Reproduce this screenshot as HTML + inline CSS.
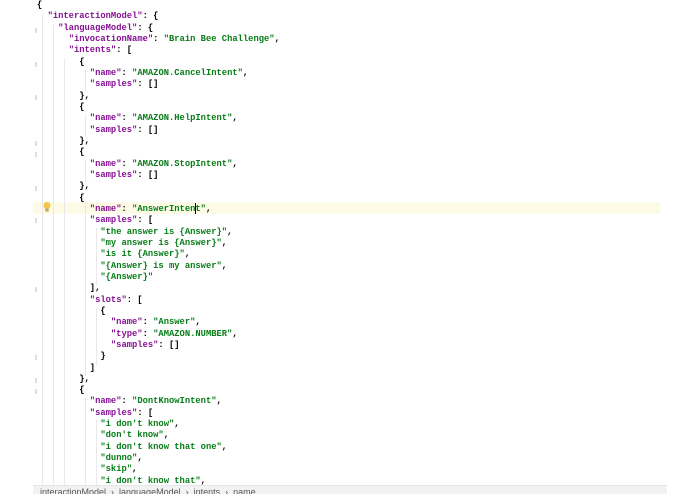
<!DOCTYPE html>
<html><head><style>
html,body{margin:0;padding:0;background:#fff;width:695px;height:494px;overflow:hidden;position:relative}
pre{position:absolute;left:37px;top:0px;margin:0;font-family:"Liberation Mono",monospace;font-weight:bold;font-size:8.8px;line-height:11.33px;color:#000;z-index:2}
.k{color:#871094}.s{color:#067d17}
.g{position:absolute;width:1px;background:#e8e8e8;z-index:1}
.hl{position:absolute;left:33px;top:202px;width:627px;height:12px;background:#fdfbe5;z-index:0}
.m{position:absolute;left:35px;width:2px;height:5px;background:#ddd}
.bar{position:absolute;left:33px;top:485px;width:627px;height:9px;background:#f2f2f2;border-top:1px solid #e6e6e6;font:9px "Liberation Sans",sans-serif;color:#555;padding-left:7px;line-height:12px;z-index:3}
.caret{position:absolute;left:195px;top:203px;width:1px;height:11px;background:#000;z-index:4}
</style></head><body>
<div class="hl"></div>
<div class="g" style="left:42px;top:14px;height:473px"></div>
<div class="g" style="left:53px;top:25px;height:462px"></div>
<div class="g" style="left:64px;top:59px;height:428px"></div>
<div class="g" style="left:85px;top:70px;height:22px"></div>
<div class="g" style="left:85px;top:115px;height:22px"></div>
<div class="g" style="left:85px;top:160px;height:22px"></div>
<div class="g" style="left:85px;top:206px;height:170px"></div>
<div class="g" style="left:96px;top:228px;height:57px"></div>
<div class="g" style="left:96px;top:308px;height:57px"></div>
<div class="g" style="left:85px;top:398px;height:88px"></div>
<div class="g" style="left:96px;top:420px;height:66px"></div>
<div class="m" style="top:28px"></div><div class="m" style="top:62px"></div><div class="m" style="top:95px"></div><div class="m" style="top:141px"></div><div class="m" style="top:152px"></div><div class="m" style="top:186px"></div><div class="m" style="top:218px"></div><div class="m" style="top:287px"></div><div class="m" style="top:355px"></div><div class="m" style="top:378px"></div><div class="m" style="top:389px"></div>
<svg style="position:absolute;left:42px;top:201px;z-index:4" width="10" height="12"><circle cx="5" cy="4.5" r="3.6" fill="#f3c74a"/><rect x="3.3" y="7.5" width="3.4" height="3" fill="#b9a46a"/></svg>
<div class="caret"></div>
<pre>{
  <span class="k">"interactionModel"</span>: {
    <span class="k">"languageModel"</span>: {
      <span class="k">"invocationName"</span>: <span class="s">"Brain Bee Challenge"</span>,
      <span class="k">"intents"</span>: [
        {
          <span class="k">"name"</span>: <span class="s">"AMAZON.CancelIntent"</span>,
          <span class="k">"samples"</span>: []
        },
        {
          <span class="k">"name"</span>: <span class="s">"AMAZON.HelpIntent"</span>,
          <span class="k">"samples"</span>: []
        },
        {
          <span class="k">"name"</span>: <span class="s">"AMAZON.StopIntent"</span>,
          <span class="k">"samples"</span>: []
        },
        {
          <span class="k">"name"</span>: <span class="s">"AnswerIntent"</span>,
          <span class="k">"samples"</span>: [
            <span class="s">"the answer is {Answer}"</span>,
            <span class="s">"my answer is {Answer}"</span>,
            <span class="s">"is it {Answer}"</span>,
            <span class="s">"{Answer} is my answer"</span>,
            <span class="s">"{Answer}"</span>
          ],
          <span class="k">"slots"</span>: [
            {
              <span class="k">"name"</span>: <span class="s">"Answer"</span>,
              <span class="k">"type"</span>: <span class="s">"AMAZON.NUMBER"</span>,
              <span class="k">"samples"</span>: []
            }
          ]
        },
        {
          <span class="k">"name"</span>: <span class="s">"DontKnowIntent"</span>,
          <span class="k">"samples"</span>: [
            <span class="s">"i don't know"</span>,
            <span class="s">"don't know"</span>,
            <span class="s">"i don't know that one"</span>,
            <span class="s">"dunno"</span>,
            <span class="s">"skip"</span>,
            <span class="s">"i don't know that"</span>,</pre>
<div class="bar">interactionModel &nbsp;›&nbsp; languageModel &nbsp;›&nbsp; intents &nbsp;›&nbsp; name</div>
</body></html>
